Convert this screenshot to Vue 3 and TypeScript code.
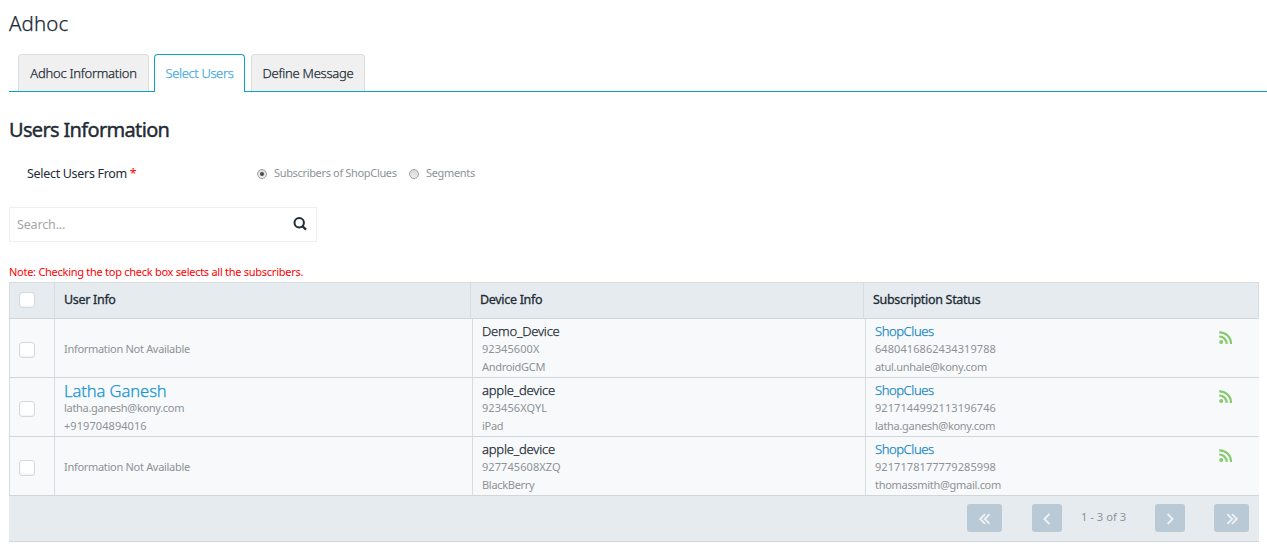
<script setup lang="ts">
import { ref } from 'vue'

interface Row {
  id: number
  name?: string
  userLines: string[]
  device: string
  deviceId: string
  platform: string
  app: string
  ksid: string
  email: string
}

const tabs: { label: string; key: string }[] = [
  { label: 'Adhoc Information', key: 'info' },
  { label: 'Select Users', key: 'users' },
  { label: 'Define Message', key: 'message' },
]
const activeTab = ref('users')
const source = ref('subscribers')

const rows: Row[] = [
  {
    id: 1,
    userLines: ['Information Not Available'],
    device: 'Demo_Device',
    deviceId: '92345600X',
    platform: 'AndroidGCM',
    app: 'ShopClues',
    ksid: '6480416862434319788',
    email: 'atul.unhale@kony.com',
  },
  {
    id: 2,
    name: 'Latha Ganesh',
    userLines: ['latha.ganesh@kony.com', '+919704894016'],
    device: 'apple_device',
    deviceId: '923456XQYL',
    platform: 'iPad',
    app: 'ShopClues',
    ksid: '9217144992113196746',
    email: 'latha.ganesh@kony.com',
  },
  {
    id: 3,
    userLines: ['Information Not Available'],
    device: 'apple_device',
    deviceId: '927745608XZQ',
    platform: 'BlackBerry',
    app: 'ShopClues',
    ksid: '9217178177779285998',
    email: 'thomassmith@gmail.com',
  },
]
</script>

<template>
  <main class="page">
    <h1 class="title">Adhoc</h1>

    <nav class="tabs">
      <button
        v-for="tab in tabs"
        :key="tab.key"
        type="button"
        class="tab"
        :class="[tab.key, { active: activeTab === tab.key }]"
        @click="activeTab = tab.key"
      >
        <span>{{ tab.label }}</span>
      </button>
    </nav>

    <h2 class="subtitle">Users Information</h2>

    <div class="source">
      <div class="source-label">Select Users From <span class="required">*</span></div>
      <label class="option first" @click="source = 'subscribers'">
        <i class="radio" :class="{ on: source === 'subscribers' }"></i>
        <span>Subscribers of ShopClues</span>
      </label>
      <label class="option" @click="source = 'segments'">
        <i class="radio" :class="{ on: source === 'segments' }"></i>
        <span>Segments</span>
      </label>
    </div>

    <div class="search">
      <input type="text" placeholder="Search..." />
      <svg width="14" height="14" viewBox="0 0 14 14" fill="none" stroke="#212b36">
        <circle cx="6.2" cy="5.8" r="4.7" stroke-width="2" />
        <path d="M9.5 9.2 13 12.6" stroke-width="2.3" />
      </svg>
    </div>

    <p class="note">Note: Checking the top check box selects all the subscribers.</p>

    <section class="grid">
      <div class="row head">
        <div class="cell check"><i class="box"></i></div>
        <div class="cell"><span>User Info</span></div>
        <div class="cell"><span>Device Info</span></div>
        <div class="cell"><span>Subscription Status</span></div>
      </div>

      <div v-for="row in rows" :key="row.id" class="row">
        <div class="cell check"><i class="box"></i></div>
        <div class="cell user">
          <a v-if="row.name" class="name">{{ row.name }}</a>
          <span v-for="line in row.userLines" :key="line" class="line" :class="{ digits: line.startsWith('+') }">{{ line }}</span>
        </div>
        <div class="cell device">
          <span class="lead">{{ row.device }}</span>
          <span class="line digits">{{ row.deviceId }}</span>
          <span class="line">{{ row.platform }}</span>
        </div>
        <div class="cell status">
          <div class="stack">
            <a class="lead link">{{ row.app }}</a>
            <span class="line digits">{{ row.ksid }}</span>
            <span class="line">{{ row.email }}</span>
          </div>
          <svg class="feed" width="14" height="14" viewBox="0 0 14 14" fill="none" stroke="#86ca6c">
            <circle cx="2.2" cy="11" r="2" fill="#86ca6c" stroke="none" />
            <path d="M.2 5.5a7.2 7.2 0 0 1 7.4 7.4" stroke-width="2.2" />
            <path d="M.2 1.3a11.4 11.4 0 0 1 11.8 11.6" stroke-width="2.2" />
          </svg>
        </div>
      </div>

      <footer class="pager">
        <button type="button" class="page-btn wide" aria-label="First">
          <svg width="14" height="12" viewBox="0 0 14 12"><path d="M7 1.2 2.2 6 7 10.8M11.6 1.2 6.8 6l4.8 4.8" /></svg>
        </button>
        <button type="button" class="page-btn prev" aria-label="Previous">
          <svg width="10" height="12" viewBox="0 0 10 12"><path d="M7.4 1 2.4 6l5 5" /></svg>
        </button>
        <span class="range">1 - 3 of 3</span>
        <button type="button" class="page-btn" aria-label="Next">
          <svg width="10" height="12" viewBox="0 0 10 12"><path d="m2.6 1 5 5-5 5" /></svg>
        </button>
        <button type="button" class="page-btn wide last" aria-label="Last">
          <svg width="14" height="12" viewBox="0 0 14 12"><path d="M2.4 1.2 7.2 6l-4.8 4.8M7 1.2 11.8 6 7 10.8" /></svg>
        </button>
      </footer>
    </section>
  </main>
</template>

<style>
html,
body {
  overflow: hidden;
  background: #fff;
}
</style>

<style scoped>
.page {
  box-sizing: border-box;
  width: 1267px;
  height: 547px;
  padding-left: 9px;
  overflow: hidden;
  font-family: 'Noto Sans', 'Open Sans', sans-serif;
  color: #222b35;
}
.page * {
  box-sizing: border-box;
}
.title {
  margin: 0;
  height: 54px;
  font-size: 20.5px;
  font-weight: 300;
  line-height: 46px;
  letter-spacing: 0.1px;
  -webkit-text-stroke: 0.25px currentColor;
}
.tabs {
  display: flex;
  height: 38px;
  padding-left: 9px;
  border-bottom: 1px solid #0aa0ce;
}
.tab {
  height: 37px;
  padding: 0;
  border: 1px solid #dedede;
  border-bottom: 0;
  border-radius: 4px 4px 0 0;
  background: #f0f0f0;
  color: #222b35;
  font-family: inherit;
  font-size: 13px;
  font-weight: 300;
  line-height: 34px;
  letter-spacing: -0.26px;
  white-space: nowrap;
  -webkit-text-stroke: 0.25px currentColor;
}
.tab.info {
  width: 131px;
  margin-right: 5px;
}
.tab.users {
  width: 91px;
  margin-right: 6px;
  letter-spacing: -0.38px;
}
.tab.message {
  width: 114px;
}
.tab.active {
  height: 38px;
  padding-bottom: 1px;
  border-color: #0aa0ce;
  background: #fff;
  color: #45a9e0;
}
.subtitle {
  margin: 0;
  height: 68px;
  font-size: 20px;
  font-weight: 400;
  line-height: 76px;
  letter-spacing: -0.67px;
  -webkit-text-stroke: 0.4px #222b35;
}
.source {
  display: flex;
  align-items: center;
  height: 28px;
  padding: 0 0 2px 18px;
}
.source-label {
  width: 230px;
  font-size: 12.5px;
  letter-spacing: -0.31px;
}
.required {
  color: #f00;
}
.option {
  display: flex;
  align-items: center;
  color: #8d9297;
  font-size: 11px;
  letter-spacing: -0.34px;
  white-space: nowrap;
}
.option span {
  margin-top: -2px;
}
.option.first {
  width: 152px;
}
.radio {
  display: flex;
  align-items: center;
  justify-content: center;
  width: 10px;
  height: 10px;
  margin: 2px 7px 0 0;
  border: 1px solid #a3a3a3;
  border-radius: 50%;
  background: linear-gradient(#d8d8d8, #ececec);
}
.radio.on::after {
  width: 4px;
  height: 4px;
  border-radius: 50%;
  background: #4a4a4a;
  content: '';
}
.search {
  display: flex;
  align-items: center;
  width: 308px;
  height: 35px;
  margin-top: 19px;
  padding: 0 9px 0 7px;
  border: 1px solid #efefef;
}
.search input {
  flex: 1;
  min-width: 0;
  padding: 0;
  border: 0;
  outline: 0;
  font-family: inherit;
  font-size: 12.5px;
  letter-spacing: -0.15px;
}
.search input::placeholder {
  color: #a5a5a5;
}
.search svg {
  margin-top: -2px;
}
.note {
  margin: 21px 0 0;
  height: 19px;
  color: #f00;
  font-size: 11px;
  line-height: 18px;
  letter-spacing: -0.27px;
}
.grid {
  width: 1250px;
}
.row {
  display: grid;
  grid-template-columns: 45px 418px 393px 394px;
  height: 59px;
  border-bottom: 1px solid #d3d6d9;
  background: #f8f9fb;
}
.row.head {
  grid-template-columns: 45px 416px 393px 396px;
  height: 37px;
  border-top: 1px solid #d9dcde;
  border-right: 1px solid #d9dcde;
  background: #e6ebef;
}
.cell {
  display: flex;
  flex-direction: column;
  justify-content: center;
  align-items: flex-start;
  border-left: 1px solid #d9dcde;
  padding-left: 9px;
  white-space: nowrap;
}
.head .cell {
  padding-bottom: 2px;
  font-size: 12.5px;
  letter-spacing: -0.31px;
  -webkit-text-stroke: 0.3px #222b35;
}
.box {
  width: 16px;
  height: 16px;
  margin-top: 4px;
  border: 1px solid #d6d9db;
  border-radius: 3px;
  background: #fff;
  box-shadow: inset 0 -1px 2px rgba(0, 0, 0, 0.06);
}
.head .box {
  margin-top: 0;
}
.user {
  padding-top: 2px;
}
.name {
  height: 17px;
  color: #1296d4;
  font-size: 16.5px;
  font-weight: 300;
  line-height: 17px;
  letter-spacing: -0.05px;
  -webkit-text-stroke: 0.25px currentColor;
}
.device,
.status {
  padding-top: 2px;
}
.lead {
  height: 17px;
  font-size: 13px;
  font-weight: 300;
  line-height: 16px;
  letter-spacing: -0.2px;
  -webkit-text-stroke: 0.25px currentColor;
}
.link {
  color: #1787c4;
  letter-spacing: -0.42px;
}
.line {
  height: 18px;
  color: #8d9297;
  font-size: 11px;
  line-height: 18px;
  letter-spacing: -0.3px;
}
.line.digits {
  letter-spacing: 0.07px;
}
.status {
  flex-direction: row;
  align-items: center;
  justify-content: space-between;
  padding-right: 26px;
}
.stack {
  display: flex;
  flex-direction: column;
}
.feed {
  margin-top: -22px;
}
.pager {
  display: flex;
  align-items: flex-start;
  height: 46px;
  padding: 8px 10px 0 958px;
  border-bottom: 1px solid #d3d6d9;
  background: #e6ebef;
}
.page-btn {
  display: flex;
  flex: none;
  align-items: center;
  justify-content: center;
  width: 30px;
  height: 28px;
  padding: 2px 0 0;
  border: 0;
  border-radius: 3px;
  background: #bac9d6;
}
.page-btn svg {
  fill: none;
  stroke: #eef2f5;
  stroke-width: 1.8;
}
.page-btn.wide {
  width: 35px;
}
.page-btn.prev {
  margin-left: 30px;
}
.page-btn.last {
  margin-left: 29px;
}
.range {
  width: 93px;
  padding-left: 19px;
  color: #8d9297;
  font-size: 11.2px;
  line-height: 26px;
  white-space: nowrap;
}
</style>
